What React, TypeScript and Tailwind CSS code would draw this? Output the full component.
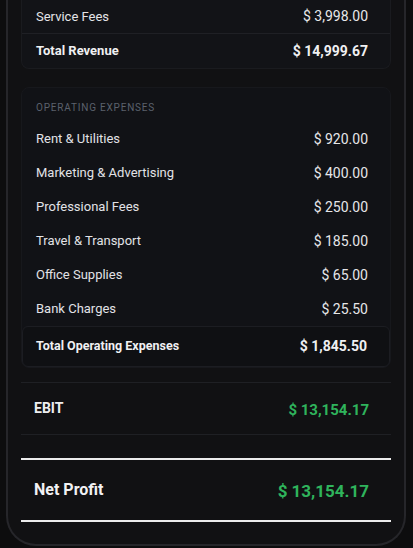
const expenses = [
  { label: 'Rent & Utilities', value: '$ 920.00' },
  { label: 'Marketing & Advertising', value: '$ 400.00' },
  { label: 'Professional Fees', value: '$ 250.00' },
  { label: 'Travel & Transport', value: '$ 185.00' },
  { label: 'Office Supplies', value: '$ 65.00' },
  { label: 'Bank Charges', value: '$ 25.50' },
]

export default function App() {
  return (
    <div className="h-[548px] w-[413px] overflow-hidden bg-[#0d0d0e] font-['Roboto',sans-serif]">
      <div className="ml-[6px] mr-[7px] h-[546px] rounded-b-[30px] border-x-2 border-b-2 border-[#26262a] bg-[#111113] px-[13px]">

        {/* Revenue (continued) */}
        <div className="rounded-b-lg border-x border-b border-[#1a1b1f] bg-[#121317]">
          <div className="flex h-[33px] items-center justify-between pl-[14px] pr-[22px]">
            <span className="text-[13px] text-[#e4e4e7]">Service Fees</span>
            <span className="text-[14px] text-[#e8e8ea]">$ 3,998.00</span>
          </div>
          <div className="flex h-[35px] items-center justify-between border-t border-[#1f2025] pl-[14px] pr-[22px]">
            <span className="text-[13px] font-bold text-[#f0f0f2]">Total Revenue</span>
            <span className="text-[14px] font-bold text-[#f0f0f2]">$ 14,999.67</span>
          </div>
        </div>

        {/* Operating expenses */}
        <div className="mt-[18px] rounded-lg border border-[#17181c] bg-[#111216]">
          <div className="flex h-[34px] items-center pl-[14px] pt-1">
            <span className="text-[10px] tracking-[0.08em] text-[#5b616c]">OPERATING EXPENSES</span>
          </div>
          {expenses.map(({ label, value }) => (
            <div key={label} className="flex h-[34px] items-center justify-between pl-[14px] pr-[22px]">
              <span className="text-[13px] text-[#e2e2e6]">{label}</span>
              <span className="text-[14px] text-[#e6e6e9]">{value}</span>
            </div>
          ))}
          <div className="flex h-[41px] items-center justify-between rounded-md border border-[#1c1d22] bg-[#0f1013] pl-[13px] pr-[22px]">
            <span className="text-[12.5px] font-bold text-[#f0f0f2]">Total Operating Expenses</span>
            <span className="text-[14px] font-bold text-[#f0f0f2]">$ 1,845.50</span>
          </div>
        </div>

        {/* EBIT */}
        <div className="mt-[14px] flex h-[53px] items-center justify-between border-y border-[#1f2024] pl-[13px] pr-[22px]">
          <span className="text-[14px] font-bold text-[#eeeef0]">EBIT</span>
          <span className="mt-1 text-[15px] font-bold text-[#2fb45c]">$ 13,154.17</span>
        </div>

        {/* Net profit */}
        <div className="mt-[23px] flex h-[64px] items-center justify-between border-y-2 border-[#ececec] pl-[13px] pr-[22px]">
          <span className="text-[16px] font-bold text-[#f2f2f4]">Net Profit</span>
          <span className="mt-1 text-[17px] font-bold text-[#2fb45c]">$ 13,154.17</span>
        </div>

      </div>
    </div>
  )
}
